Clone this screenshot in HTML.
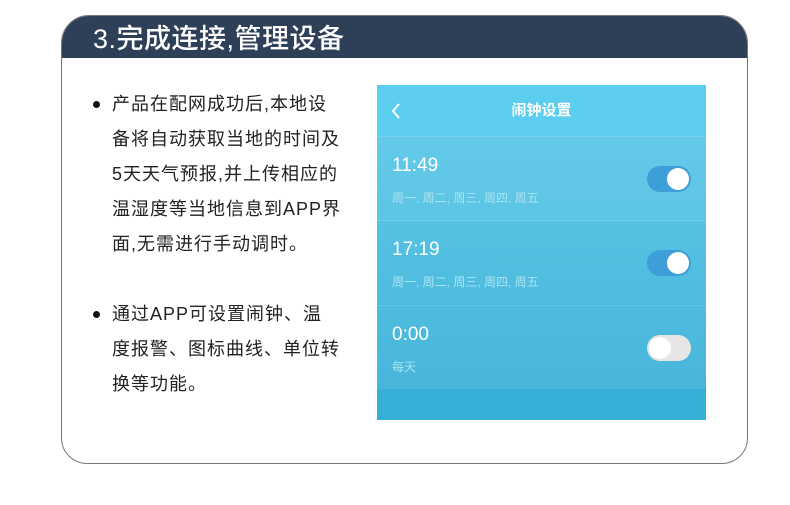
<html><head><style>
body{margin:0;width:790px;height:505px;background:#fff;position:relative;font-family:"Liberation Sans","Noto Sans CJK SC",sans-serif;overflow:hidden}
.box{position:absolute;left:61px;top:15px;width:685px;height:447px;border:1px solid #777;border-radius:28px 28px 26px 26px;overflow:hidden}
.hd{position:absolute;left:0;top:0;right:0;height:42px;background:#2e3f58;color:#fff;font-size:27px;line-height:46px;padding-left:31px;font-weight:500;letter-spacing:0.5px}
.txt{position:absolute;left:112px;font-size:18px;line-height:35px;color:#222;white-space:nowrap;letter-spacing:1px}
.dot{position:absolute;left:93px;width:7px;height:7px;border-radius:50%;background:#111}
.ph{position:absolute;left:377px;top:85px;width:329px;height:335px;background:linear-gradient(#60cbea,#45b4d9)}
.ph .top{position:absolute;left:0;top:0;right:0;height:51px;background:#5bcdee;color:#fff;text-align:center;font-size:15px;font-weight:bold;line-height:52px}
.row{position:absolute;left:0;right:0;height:84px;border-top:1px solid rgba(255,255,255,.12)}
.t{position:absolute;left:15px;top:18px;color:#fff;font-size:19px}
.s{position:absolute;left:15px;top:52px;color:#a9e4f3;font-size:12px}
.sw{position:absolute;left:270px;top:29px;width:44px;height:26px;border-radius:13px;background:#3e9fd8}
.sw i{position:absolute;right:2px;top:2px;width:22px;height:22px;border-radius:50%;background:#fff}
.sw.off{background:#e6e6e6}.sw.off i{left:2px;right:auto}
.bot{position:absolute;left:0;right:0;top:304px;height:31px;background:#35afd5}
</style></head><body>
<div class="box"><div class="hd">3.完成连接,管理设备</div></div>
<div class="dot" style="top:101px"></div>
<div class="txt" style="top:87px">产品在配网成功后,本地设<br>备将自动获取当地的时间及<br>5天天气预报,并上传相应的<br>温湿度等当地信息到APP界<br>面,无需进行手动调时。</div>
<div class="dot" style="top:311px"></div>
<div class="txt" style="top:297px">通过APP可设置闹钟、温<br>度报警、图标曲线、单位转<br>换等功能。</div>
<div class="ph">
<div class="top"><svg style="position:absolute;left:14px;top:18px" width="10" height="16"><path d="M8 1L2 8L8 15" stroke="#fff" stroke-width="2" fill="none"/></svg>闹钟设置</div>
<div class="row" style="top:51px;background:rgba(255,255,255,.05)"><div class="t">11:49</div><div class="s">周一, 周二, 周三, 周四, 周五</div><div class="sw"><i></i></div></div>
<div class="row" style="top:135px"><div class="t">17:19</div><div class="s">周一, 周二, 周三, 周四, 周五</div><div class="sw"><i></i></div></div>
<div class="row" style="top:220px"><div class="t">0:00</div><div class="s">每天</div><div class="sw off"><i></i></div></div>
<div class="bot"></div>
</div>
</body></html>
